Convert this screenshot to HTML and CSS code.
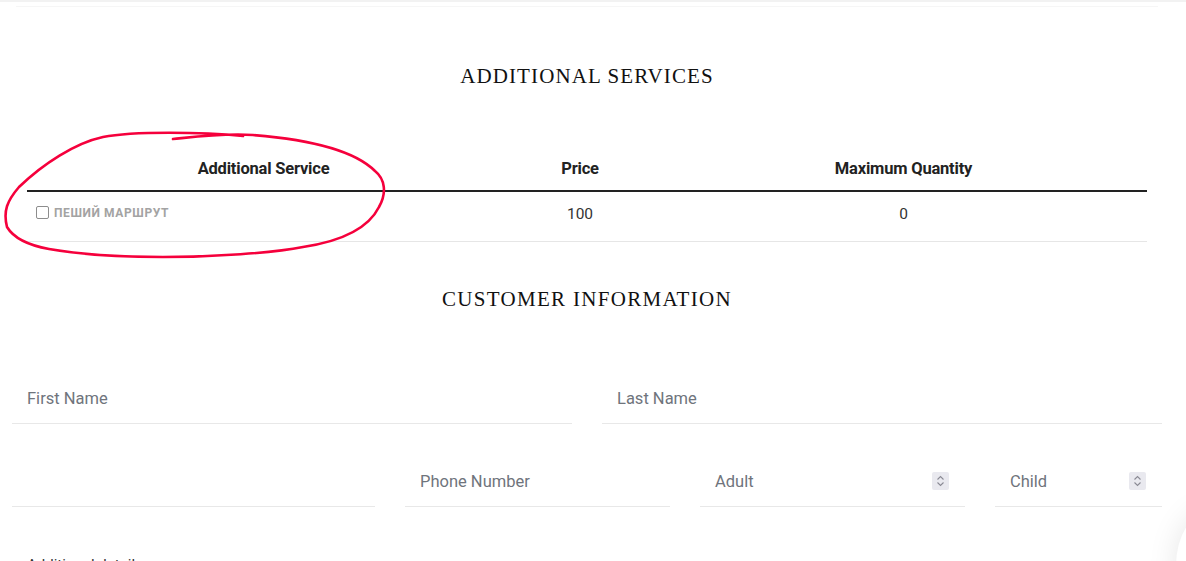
FILE: index.html
```html
<!DOCTYPE html>
<html lang="en">
<head>
<meta charset="utf-8">
<title>Booking</title>
<link rel="stylesheet" href="styles.css">
</head>
<body>
<div class="topbar"></div>
<main class="page">
  <section class="services">
    <h2 class="title">ADDITIONAL SERVICES</h2>
    <table class="svc-table">
      <thead>
        <tr>
          <th class="c1">Additional Service</th>
          <th class="c2">Price</th>
          <th class="c3">Maximum Quantity</th>
        </tr>
      </thead>
      <tbody>
        <tr>
          <td class="c1 svc-name"><label class="chk"><span class="box"></span>ПЕШИЙ МАРШРУТ</label></td>
          <td class="c2">100</td>
          <td class="c3">0</td>
        </tr>
      </tbody>
    </table>
    <svg class="annot" width="392" height="134" viewBox="0 0 392 134" aria-hidden="true">
      <path d="M 240 7 C 200 3 130 2 100 8 C 72 14 40 35 16 58 C 4 72 0 82 4 98 C 10 108 24 116 46 120 C 80 126 120 128 160 128 C 210 128 270 124 300 118 C 340 112 366 98 376 78 C 384 64 382 50 372 42 C 350 20 300 10 250 6 C 220 4 190 8 170 10" fill="none" stroke="#f5003c" stroke-width="2.6" stroke-linecap="round" stroke-linejoin="round"/>
    </svg>
  </section>

  <section class="customer">
    <h2 class="title title2">CUSTOMER INFORMATION</h2>
    <div class="row row-2">
      <div class="field"><span class="ph">First Name</span></div>
      <div class="field"><span class="ph">Last Name</span></div>
    </div>
    <div class="row row-4">
      <div class="field"><span class="ph"></span></div>
      <div class="field"><span class="ph">Phone Number</span></div>
      <div class="field num"><span class="ph">Adult</span><span class="spin"><svg width="17" height="18" viewBox="0 0 17 18"><path d="M5.5 7.5 L8.5 4.5 L11.5 7.5 M5.5 10.5 L8.5 13.5 L11.5 10.5" fill="none" stroke="#8a8a94" stroke-width="1.1"/></svg></span></div>
      <div class="field num"><span class="ph">Child</span><span class="spin"><svg width="17" height="18" viewBox="0 0 17 18"><path d="M5.5 7.5 L8.5 4.5 L11.5 7.5 M5.5 10.5 L8.5 13.5 L11.5 10.5" fill="none" stroke="#8a8a94" stroke-width="1.1"/></svg></span></div>
    </div>
    <p class="extra">Additional details</p>
  </section>
</main>
<div class="float-shadow"></div>
</body>
</html>
```

FILE: styles.css
```css
html, body {
  margin: 0;
  padding: 0;
  background: #fff;
  height: 561px;
  overflow: hidden;
}
body {
  font-family: Roboto, "Noto Sans", Arial, sans-serif;
  color: #222;
}
.topbar {
  height: 2px;
  background: #f2f2f2;
  margin: 0;
}
.page {
  margin: 4px 28px 0 16px;
  border-top: 1px solid #f6f6f6;
}
.services {
  position: relative;
}
.title {
  margin: 0;
  text-align: center;
  font-family: "Liberation Serif", "DejaVu Serif", serif;
  font-weight: 400;
  font-size: 21px;
  letter-spacing: 1.1px;
  color: #111;
  line-height: 24px;
  padding-top: 57px;
}
.svc-table {
  margin: 58px 0 0 11px;
  width: 1120px;
  border-collapse: collapse;
  table-layout: fixed;
  font-size: 15px;
}
.svc-table th {
  font-weight: 700;
  font-size: 16.5px;
  color: #222;
  height: 44px;
  padding: 0;
  vertical-align: middle;
  border-bottom: 2px solid #222;
  letter-spacing: -0.2px;
}
.svc-table td {
  height: 44px;
  padding: 0 0 5px 0;
  text-align: center;
  border-bottom: 1px solid #e6e6e6;
  color: #333;
  font-size: 15.5px;
}
.c1 { width: 473px; }
.c2 { width: 160px; }
.c3 { width: 487px; }
.svc-table td.svc-name {
  text-align: left;
  padding-left: 9px;
}
.chk {
  display: inline-flex;
  align-items: center;
  gap: 5px;
  font-size: 12px;
  font-weight: 700;
  color: #a3a3a3;
  letter-spacing: 0.6px;
}
.box {
  width: 11px;
  height: 11px;
  border: 1.5px solid #8d8d8d;
  border-radius: 2px;
  display: inline-block;
}
.annot {
  position: absolute;
  left: -13px;
  top: 122px;
}
.title2 {
  padding-top: 45px;
  font-size: 21px;
  letter-spacing: 1.3px;
}
.row {
  display: grid;
  column-gap: 30px;
  margin: 0 -4px 0 -4px;
}
.row-2 {
  grid-template-columns: 1fr 1fr;
  margin-top: 61px;
}
.row-4 {
  grid-template-columns: 363fr 265fr 265fr 167fr;
  margin-top: 31px;
}
.field {
  height: 52px;
  border-bottom: 1px solid #e8e8e8;
  display: flex;
  align-items: center;
  justify-content: space-between;
  padding: 1px 16px 0 15px;
  box-sizing: border-box;
}
.ph {
  font-size: 16.5px;
  color: #6f747c;
}
.spin {
  width: 17px;
  height: 18px;
  background: #e9e9ef;
  border-radius: 2px;
  display: flex;
}
.extra {
  margin: 49px 0 0 11px;
  font-size: 15px;
  color: #333;
}
.float-shadow {
  position: fixed;
  right: -60px;
  bottom: -60px;
  width: 70px;
  height: 110px;
  border-radius: 50%;
  box-shadow: 0 0 30px rgba(0,0,0,0.1);
  background: #fff;
}
```
